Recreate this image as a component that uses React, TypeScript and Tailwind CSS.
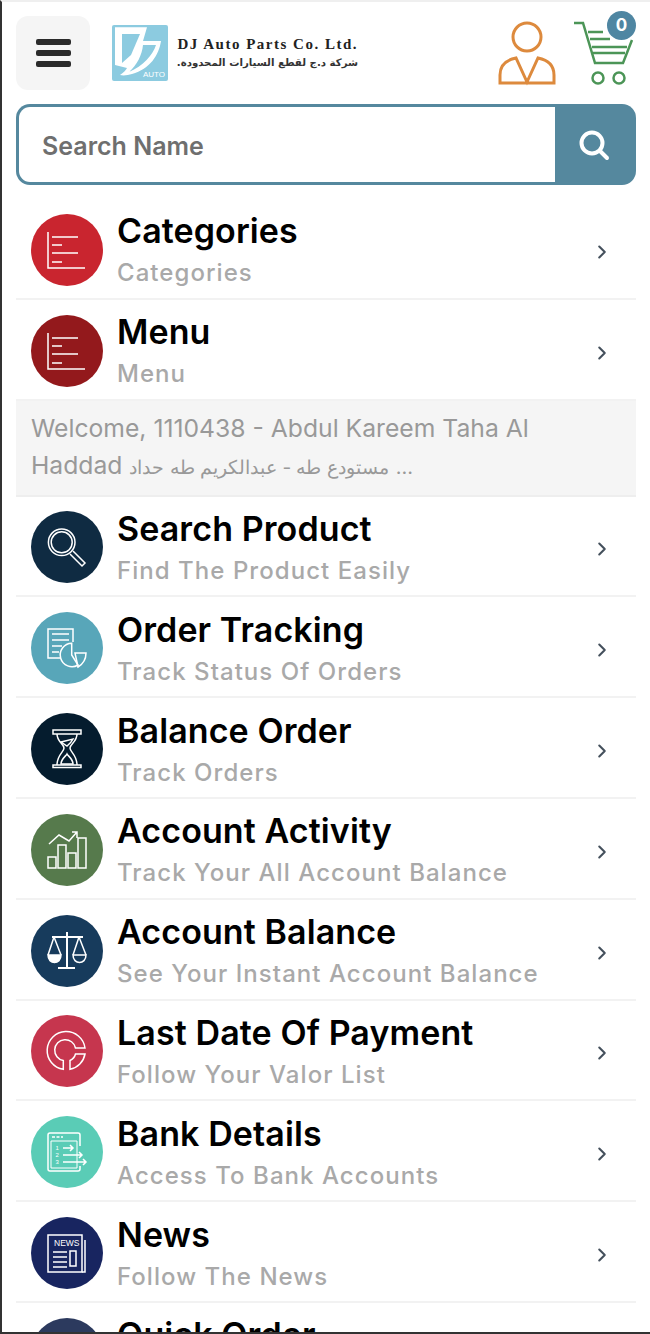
import { ChevronRight } from 'lucide-react';
import type { ReactNode } from 'react';

const ListIcon = (
  <g>
    <path d="M17 18V54H54" />
    <path d="M21 23H47M21 31H31M21 39H47M21 48H31" />
  </g>
);

const SearchIcon = (
  <g>
    <circle cx="30.700" cy="31.300" r="13.300" />
    <circle cx="30.700" cy="31.300" r="10.500" />
    <path d="M42 40L54 52L51 55L39 43" />
  </g>
);

const TrackIcon = (
  <g>
    <path d="M42 30V17H17V46H29" />
    <path d="M21 22H38M21 28H38M21 34H31M21 40H28" />
    <path d="M40.700 31.300A11.700 11.700 0 1 0 47 53L40.700 43Z" />
    <path d="M44 41H55C55 48 52 52 47 55Z" />
  </g>
);

const HourglassIcon = (
  <g>
    <path d="M22 17H50V21H22ZM22 52H50V54.500H22Z" />
    <path d="M26 21C26 29 33 31 33 35C33 39 26 42 26 52M46 21C46 29 39 31 39 35C39 39 46 42 46 52" />
    <path d="M30 29L42 26C40 30 37 32 36 33ZM30 51C30 46 35 43 36 41C37 43 42 46 42 51Z" />
  </g>
);

const ActivityIcon = (
  <g>
    <path d="M18 30L28 21L38 27L46 18M41 18H46V24" />
    <path d="M17 43H25V54H17ZM27 31H35V54H27ZM37 39H45V54H37ZM47 24H55V54H47Z" />
  </g>
);

const BalanceIcon = (
  <g>
    <path d="M36 17V52M27 53H44M21 22H52" strokeWidth="2" />
    <path d="M23 22L17 40M23 22L30 40M48 22L42 40M48 22L55 40" />
    <path d="M42 40H55C55 50 42 50 42 40Z" />
    <path d="M17 40H30C30 50 17 50 17 40Z" fill="#ffffff" />
  </g>
);

const PaymentIcon = (
  <g>
    <path d="M32.300 54.300A19 19 0 1 1 54 33H44.500A10.500 10.500 0 1 0 32.300 45.500Z" />
    <path d="M39 54.300A19 19 0 0 0 54 39H44.500A10 10 0 0 1 39 45.500Z" />
  </g>
);

const BankIcon = (
  <g>
    <path d="M49 30V19Q49 17 47 17H19Q17 17 17 19V53Q17 55 19 55H47Q49 55 49 53V50" />
    <path d="M20 25H46V52H20Z" strokeWidth="1" />
    <path d="M21 21H32" strokeDasharray="3 1.500" />
    <path d="M32 32H42M39 29L42 32L39 35M32 39H51M48 36L51 39L48 42M32 46H55M52 43L55 46L52 49" />
    <text x="24.500" y="34" fontSize="6" fill="#ffffff" stroke="none" fontFamily="'Liberation Sans', sans-serif">1</text>
    <text x="24.500" y="41" fontSize="6" fill="#ffffff" stroke="none" fontFamily="'Liberation Sans', sans-serif">2</text>
    <text x="24.500" y="48" fontSize="6" fill="#ffffff" stroke="none" fontFamily="'Liberation Sans', sans-serif">3</text>
  </g>
);

const NewsIcon = (
  <g>
    <path d="M17 18H51V55H17Z" />
    <path d="M54 23V55H51" />
    <path d="M22 35H36M22 40H36M22 45H36M22 50H36" />
    <path d="M39 34H45V49H39Z" />
    <text x="23" y="29" fontSize="8.500" fill="#ffffff" stroke="none" fontFamily="'Liberation Sans', sans-serif">NEWS</text>
  </g>
);

const OrderIcon = (
  <g>
    <path d="M20 24H52" />
  </g>
);

interface MenuRow {
  title: string;
  sub: string;
  circle: string;
  icon: ReactNode;
}

const topRows: MenuRow[] = [
  { title: 'Categories', sub: 'Categories', circle: 'bg-[#c9252f]', icon: ListIcon },
  { title: 'Menu', sub: 'Menu', circle: 'bg-[#93191c]', icon: ListIcon },
];

const rows: MenuRow[] = [
  { title: 'Search Product', sub: 'Find The Product Easily', circle: 'bg-[#0f2b42]', icon: SearchIcon },
  { title: 'Order Tracking', sub: 'Track Status Of Orders', circle: 'bg-[#58a6b9]', icon: TrackIcon },
  { title: 'Balance Order', sub: 'Track Orders', circle: 'bg-[#051c2e]', icon: HourglassIcon },
  { title: 'Account Activity', sub: 'Track Your All Account Balance', circle: 'bg-[#567a4c]', icon: ActivityIcon },
  { title: 'Account Balance', sub: 'See Your Instant Account Balance', circle: 'bg-[#173b5c]', icon: BalanceIcon },
  { title: 'Last Date Of Payment', sub: 'Follow Your Valor List', circle: 'bg-[#c6364e]', icon: PaymentIcon },
  { title: 'Bank Details', sub: 'Access To Bank Accounts', circle: 'bg-[#5accb6]', icon: BankIcon },
  { title: 'News', sub: 'Follow The News', circle: 'bg-[#182560]', icon: NewsIcon },
  { title: 'Quick Order', sub: 'Order Quickly', circle: 'bg-[#2c3a5e]', icon: OrderIcon },
];

function Row({ row }: { row: MenuRow }) {
  return (
    <div className="flex h-[100.8px] items-center border-b-2 border-[#f2f2f2] pl-[15px] pr-[23px]">
      <div className={`mt-[3px] h-[72px] w-[72px] shrink-0 rounded-full ${row.circle}`}>
        <svg viewBox="0 0 72 72" className="h-[72px] w-[72px]" fill="none" stroke="#ffffff" strokeWidth="1.500">
          {row.icon}
        </svg>
      </div>
      <div className="ml-[14px] flex-1 pt-[4px]">
        <div className="text-[34px] leading-[38px] font-semibold tracking-[0.1px] text-black">{row.title}</div>
        <div className="mt-[8px] text-[24px] leading-[30px] font-medium tracking-[1.05px] text-[#a9a9a9]">{row.sub}</div>
      </div>
      <ChevronRight size={22} strokeWidth={2.25} className="mt-[7px] text-[#44505c]" />
    </div>
  );
}

export default function App() {
  return (
    <div className="h-[1334px] overflow-hidden border-t-2 border-b-2 border-l-2 border-t-[#efefef] border-b-[#333333] border-l-[#333333] bg-white pr-[14px] pl-[14px] font-['Inter',sans-serif]">
      <div className="mt-[14px] flex h-[74px] items-center">
        <button className="flex h-[74px] w-[74px] items-center justify-center rounded-xl bg-[#f5f5f5]">
          <div className="flex w-[35px] flex-col gap-[5px]">
            <span className="h-[6px] rounded-[2px] bg-[#2b2b2b]" />
            <span className="h-[6px] rounded-[2px] bg-[#2b2b2b]" />
            <span className="h-[6px] rounded-[2px] bg-[#2b2b2b]" />
          </div>
        </button>
        <div className="ml-[22px] flex items-center">
          <svg viewBox="0 0 56 56" className="h-[56px] w-[56px]">
            <rect width="56" height="56" rx="2" fill="#8ccbe0" />
            <path d="M3 2.300H35L31 16H49C47 30 38 44 20 49C16 50 12 51 8 50C12 47 14 45 15 43L3 40Z" fill="#ffffff" />
            <path d="M10 9H28L19 30L10 38Z" fill="#8ccbe0" />
            <path d="M31 20H44C41 30 31 41 17 47C25 40 30 30 31 20Z" fill="#8ccbe0" />
            <text x="31" y="52" fontSize="8" fill="#ffffff" fontFamily="'Liberation Sans', sans-serif">AUTO</text>
          </svg>
          <div className="ml-[10px] flex w-[180px] flex-col items-end">
            <span className="mb-[2px] font-['Liberation_Serif',serif] text-[15px] leading-[18px] font-bold tracking-[1.5px] whitespace-nowrap text-[#222222]">DJ Auto Parts Co. Ltd.</span>
            <span dir="rtl" className="font-['DejaVu_Sans',sans-serif] text-[10.200px] leading-[16px] font-bold whitespace-nowrap text-[#333333]">شركة د.ج لقطع السيارات المحدودة.</span>
          </div>
        </div>
        <div className="ml-auto flex items-center">
          <svg viewBox="0 0 58 65" className="h-[65px] w-[58px]" fill="none" stroke="#dd8a3d" strokeWidth="3">
            <circle cx="29" cy="16" r="14" />
            <path d="M2 62H56V54C56 45 50 39 40 37L29 61L18 37C8 39 2 45 2 54Z" />
          </svg>
          <div className="relative ml-[16px] h-[66px] w-[64px]">
            <svg viewBox="0 0 64 66" className="h-[66px] w-[64px]" fill="none" stroke="#4c9557" strokeWidth="2.500">
              <path d="M2 3H11L23 43H51L60 20" />
              <path d="M16 12H31M18 19H38M20 27H55M21 33H53" />
              <circle cx="26" cy="58" r="5.500" />
              <circle cx="47" cy="58" r="5.500" />
            </svg>
            <span className="absolute top-[-9px] left-[35px] flex h-[29px] w-[29px] items-center justify-center rounded-full bg-[#4f86a2] text-[17px] font-bold text-white">0</span>
          </div>
        </div>
      </div>

      <div className="mt-[14px] flex h-[81px] rounded-[14px] bg-[#55889e] p-[3px]">
        <div className="flex flex-1 items-center rounded-l-[11px] bg-white pt-[4px] pl-[23px] text-[25px] font-semibold text-[#6f6f6f]">Search Name</div>
        <div className="flex w-[78px] items-center justify-center">
          <svg viewBox="0 0 32 32" className="mt-[2px] h-[32px] w-[32px]" fill="none" stroke="#ffffff" strokeWidth="4" strokeLinecap="round">
            <circle cx="14" cy="13" r="10.500" />
            <path d="M22 21L29 28" />
          </svg>
        </div>
      </div>

      <div className="mt-[14px]">
        {topRows.map((row) => (
          <Row key={row.title} row={row} />
        ))}
        <div className="border-b-2 border-[#eeeeee] bg-[#f5f5f5] px-[15px] py-[9px] text-[24.700px] leading-[37px] text-[#999999]">
          Welcome, 1110438 - Abdul Kareem Taha Al
          <br />
          Haddad <span className="text-[19px]">مستودع طه - عبدالكريم طه حداد</span> <span className="text-[20px]">...</span>
        </div>
        {rows.map((row) => (
          <Row key={row.title} row={row} />
        ))}
      </div>
    </div>
  );
}
